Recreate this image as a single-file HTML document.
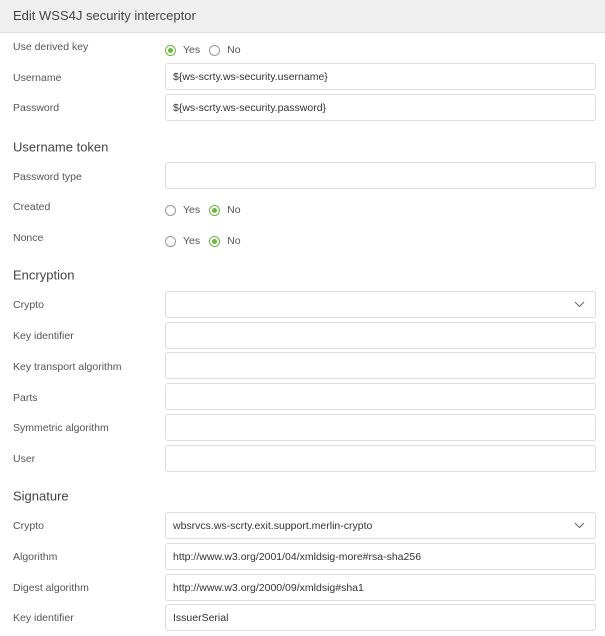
<!DOCTYPE html>
<html><head><style>
body{margin:0;width:605px;height:636px;overflow:hidden;background:#fff;font-family:"Liberation Sans",sans-serif;color:#555;position:relative}
.hdr{position:absolute;left:0;top:0;width:605px;height:33px;background:#efefef;border-bottom:1px solid #ddd;box-sizing:border-box}
.hdr span{position:absolute;left:13px;top:8px;font-size:13px;color:#444}
.l{position:absolute;left:13px;font-size:10.5px;color:#555;transform:translateY(-50%);margin-top:1px}
.h{position:absolute;left:13px;font-size:13px;color:#444;transform:translateY(-50%);margin-top:1px}
.i{position:absolute;left:165px;width:431px;height:27px;border:1px solid #ddd;border-radius:3px;box-sizing:border-box;font-size:10.5px;color:#333;padding:7px 0 0 7px}
.r{position:absolute;left:165px;font-size:10.5px;color:#555;transform:translateY(-50%);display:flex;align-items:center;margin-top:1px}
.c{display:inline-block;width:9px;height:9px;border:1px solid #999;border-radius:50%;margin-right:7px;position:relative}
.c.on{border-color:#6aba3c}
.c.on:after{content:"";position:absolute;left:2px;top:2px;width:5px;height:5px;border-radius:50%;background:#6aba3c}
.sp{margin-right:9px}
.chev{position:absolute;right:10px;top:9px}
</style></head><body>
<div class="hdr"><span>Edit WSS4J security interceptor</span></div>

<div class="l" style="top:46px">Use derived key</div>
<div class="r" style="top:49px"><span class="c on"></span><span class="sp">Yes</span><span class="c"></span>No</div>
<div class="l" style="top:77px">Username</div>
<div class="i" style="top:63px">${ws-scrty.ws-security.username}</div>
<div class="l" style="top:107px">Password</div>
<div class="i" style="top:94px">${ws-scrty.ws-security.password}</div>

<div class="h" style="top:146px">Username token</div>
<div class="l" style="top:176px">Password type</div>
<div class="i" style="top:162px"></div>
<div class="l" style="top:206px">Created</div>
<div class="r" style="top:209px"><span class="c"></span><span class="sp">Yes</span><span class="c on"></span>No</div>
<div class="l" style="top:237px">Nonce</div>
<div class="r" style="top:240px"><span class="c"></span><span class="sp">Yes</span><span class="c on"></span>No</div>

<div class="h" style="top:274px">Encryption</div>
<div class="l" style="top:304px">Crypto</div>
<div class="i" style="top:291px"><svg class="chev" width="11" height="7" viewBox="0 0 11 7"><path d="M1 1l4.5 4.5L10 1" fill="none" stroke="#666" stroke-width="1"/></svg></div>
<div class="l" style="top:335px">Key identifier</div>
<div class="i" style="top:322px"></div>
<div class="l" style="top:366px">Key transport algorithm</div>
<div class="i" style="top:352px"></div>
<div class="l" style="top:397px">Parts</div>
<div class="i" style="top:383px"></div>
<div class="l" style="top:427px">Symmetric algorithm</div>
<div class="i" style="top:414px"></div>
<div class="l" style="top:458px">User</div>
<div class="i" style="top:445px"></div>

<div class="h" style="top:495px">Signature</div>
<div class="l" style="top:525px">Crypto</div>
<div class="i" style="top:512px">wbsrvcs.ws-scrty.exit.support.merlin-crypto<svg class="chev" width="11" height="7" viewBox="0 0 11 7"><path d="M1 1l4.5 4.5L10 1" fill="none" stroke="#666" stroke-width="1"/></svg></div>
<div class="l" style="top:556px">Algorithm</div>
<div class="i" style="top:543px">http://www.w3.org/2001/04/xmldsig-more#rsa-sha256</div>
<div class="l" style="top:587px">Digest algorithm</div>
<div class="i" style="top:574px">http://www.w3.org/2000/09/xmldsig#sha1</div>
<div class="l" style="top:617px">Key identifier</div>
<div class="i" style="top:604px">IssuerSerial</div>
</body></html>
